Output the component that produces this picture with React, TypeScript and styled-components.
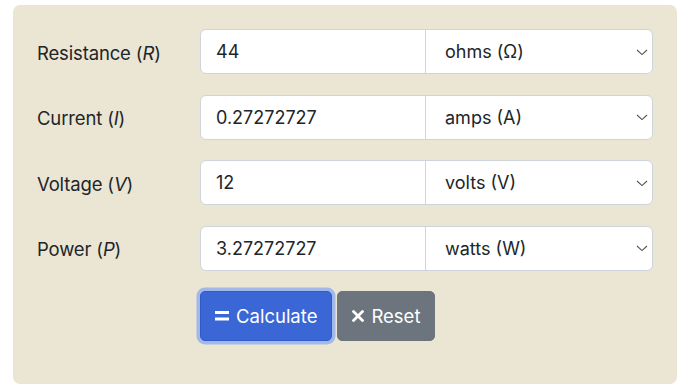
import { useState } from 'react';
import styled, { createGlobalStyle } from 'styled-components';

const GlobalStyle = createGlobalStyle`
  body {
    margin: 0;
    background: #ffffff;
    font-family: Inter, "Liberation Sans", sans-serif;
    color: #212529;
  }
`;

const Panel = styled.form`
  box-sizing: border-box;
  width: 664px;
  margin: 5px 0 0 13px;
  padding: 24px 24px 43px;
  background: #ebe5d4;
  border-radius: 7px;
  display: flex;
  flex-direction: column;
  gap: 20.5px;
`;

const Row = styled.div`
  display: grid;
  grid-template-columns: 163px 1fr;
  align-items: center;
`;

const Label = styled.label`
  font-size: 18.5px;
  letter-spacing: -0.15px;
  color: #212529;
  padding-top: 2px;

  i {
    font-style: italic;
  }
`;

const Group = styled.div`
  display: flex;
  height: 45px;
  box-sizing: border-box;
  border: 1px solid #ced4da;
  border-radius: 6px;
  background: #fff;
  overflow: hidden;
`;

const ValueInput = styled.input`
  flex: 1;
  min-width: 0;
  border: none;
  outline: none;
  padding: 0 15px;
  font: inherit;
  font-size: 18px;
  color: #212529;
  background: transparent;
`;

const SelectWrap = styled.div`
  position: relative;
  width: 226px;
  border-left: 1px solid #ced4da;
`;

const UnitSelect = styled.select`
  appearance: none;
  width: 100%;
  height: 100%;
  border: none;
  outline: none;
  padding: 0 36px 0 19px;
  font: inherit;
  font-size: 18px;
  color: #212529;
  background: transparent;
`;

const Chevron = styled.svg`
  position: absolute;
  right: 4px;
  top: 50%;
  margin-top: -3px;
  pointer-events: none;
`;

const Actions = styled.div`
  display: flex;
  gap: 5px;
  padding-left: 163px;
`;

const Button = styled.button<{ $variant: 'primary' | 'secondary' }>`
  height: 50px;
  padding: 0 14px;
  display: inline-flex;
  align-items: center;
  gap: 7px;
  font: inherit;
  font-size: 18.5px;
  color: #fff;
  border-radius: 5px;
  cursor: pointer;
  border: 1px solid ${p => (p.$variant === 'primary' ? '#2f5bc9' : '#6c757d')};
  background: ${p => (p.$variant === 'primary' ? '#3b67d6' : '#6c757d')};
  box-shadow: ${p => (p.$variant === 'primary' ? '0 0 0 3.5px #a3b8e8' : 'none')};
`;

const rows = [
  { name: 'Resistance', sym: 'R', value: '44', unit: 'ohms (Ω)' },
  { name: 'Current', sym: 'I', value: '0.27272727', unit: 'amps (A)' },
  { name: 'Voltage', sym: 'V', value: '12', unit: 'volts (V)' },
  { name: 'Power', sym: 'P', value: '3.27272727', unit: 'watts (W)' }
];

const Field = ({ name, sym, value, unit }: (typeof rows)[number]) => {
  const [val, setVal] = useState(value);
  return (
    <Row>
      <Label>
        {name} (<i>{sym}</i>)
      </Label>
      <Group>
        <ValueInput value={val} onChange={e => setVal(e.target.value)} />
        <SelectWrap>
          <UnitSelect defaultValue={unit}>
            <option>{unit}</option>
          </UnitSelect>
          <Chevron width="12" height="7" viewBox="0 0 12 7">
            <path d="M1 1 L6 5.6 L11 1" fill="none" stroke="#555" strokeWidth="1.1" />
          </Chevron>
        </SelectWrap>
      </Group>
    </Row>
  );
};

const App = () => (
  <>
    <GlobalStyle />
    <Panel onSubmit={e => e.preventDefault()}>
      {rows.map(r => (
        <Field key={r.name} {...r} />
      ))}
      <Actions>
        <Button $variant="primary" type="submit">
          <svg width="14" height="12" viewBox="0 0 14 12">
            <rect x="0" y="1" width="14" height="3" fill="#fff" />
            <rect x="0" y="7.5" width="14" height="3" fill="#fff" />
          </svg>
          Calculate
        </Button>
        <Button $variant="secondary" type="reset">
          <svg width="12" height="12" viewBox="0 0 12 12">
            <path d="M1.5 1.5 L10.5 10.5 M10.5 1.5 L1.5 10.5" stroke="#fff" strokeWidth="2.8" strokeLinecap="round" />
          </svg>
          Reset
        </Button>
      </Actions>
    </Panel>
  </>
);

export default App;
